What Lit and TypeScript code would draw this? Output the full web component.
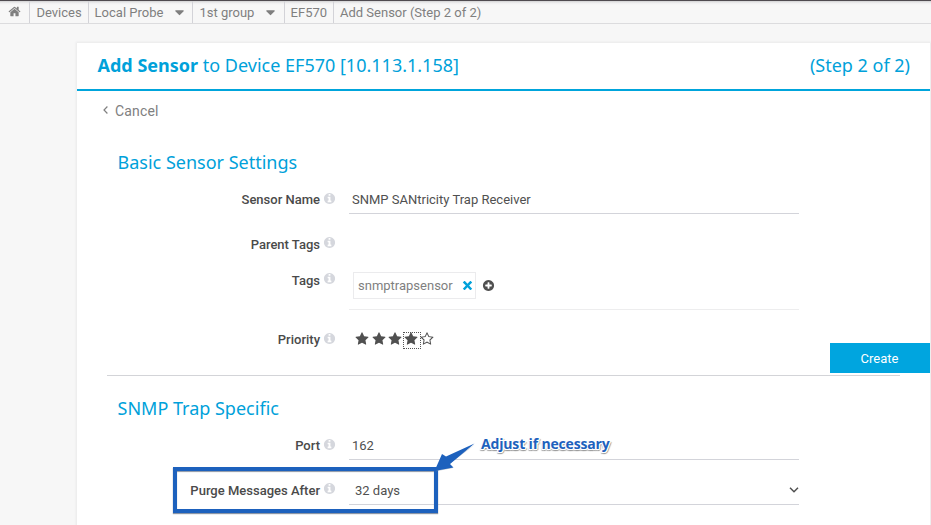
import { LitElement, html, css, svg } from "lit";
import { customElement, property } from "lit/decorators.js";

const DISC =
  "q0 209-103 385.5t-279.5 279.5-385.5 103-385.5-103-279.5-279.5-103-385.5 103-385.5 279.5-279.5 385.5-103 385.5 103 279.5 279.5 103 385.5z";

const STAR_EDGE =
  "l-363 354 86 500q1 7 1 20 0 21-10.5 35.5t-30.5 14.5q-19 0-40-12l-449-236-449 236q-22 12-40 12-21 0-31.5-14.5t-10.5-35.5q0-6 2-20l86-500-364-354q-25-27-25-48 0-37 56-46l502-73 225-455q19-41 49-41t49 41l225 455 502 73q56 9 56 46z";

const ICONS: Record<string, string> = {
  home: "M1472 992v480q0 26-19 45t-45 19h-384v-384h-256v384h-384q-26 0-45-19t-19-45v-480q0-1 .5-3t.5-3l575-474 575 474q1 2 1 6zm223-69l-62 74q-8 9-21 11h-3q-13 0-21-7l-692-577-692 577q-12 8-24 7-13-2-21-11l-62-74q-8-10-7-23.5t11-21.5l719-599q32-26 76-26t76 26l244 204v-195q0-14 9-23t23-9h192q14 0 23 9t9 23v408l219 182q10 8 11 21.5t-7 23.5z",
  star: "M1728 647q0 22-26 48" + STAR_EDGE,
  starOutline:
    "M1201 1004l306-297-422-62-189-382-189 382-422 62 306 297-73 421 378-199 377 199zm527-357q0 22-26 48" + STAR_EDGE,
  info:
    "M1152 1376v-160q0-14-9-23t-23-9h-96v-512q0-14-9-23t-23-9h-320q-14 0-23 9t-9 23v160q0 14 9 23t23 9h96v320h-96q-14 0-23 9t-9 23v160q0 14 9 23t23 9h448q14 0 23-9t9-23zm-128-896v-160q0-14-9-23t-23-9h-192q-14 0-23 9t-9 23v160q0 14 9 23t23 9h192q14 0 23-9t9-23zm640 416" + DISC,
  plus:
    "M1344 960v-128q0-26-19-45t-45-19h-256v-256q0-26-19-45t-45-19h-128q-26 0-45 19t-19 45v256h-256q-26 0-45 19t-19 45v128q0 26 19 45t45 19h256v256q0 26 19 45t45 19h128q26 0 45-19t19-45v-256h256q26 0 45-19t19-45zm320-64" + DISC,
  times:
    "M250 470L450 270H540L896 640 1252 270H1342L1542 470 1120 890 1542 1330 1342 1530H1252L896 1150 540 1530H450L250 1330 672 890z",
  caret: "M1408 704q0 26-19 45l-448 448q-19 19-45 19t-45-19l-448-448q-19-19-19-45t19-45 45-19h896q26 0 45 19t19 45z",
};

@customElement("ui-icon")
class UiIcon extends LitElement {
  @property() name = "star";

  static styles = css`
    :host {
      display: block;
      flex: none;
      width: 13px;
      height: 13px;
    }
    svg {
      display: block;
      width: 100%;
      height: 100%;
      fill: currentColor;
    }
  `;

  render() {
    return html`<svg viewBox="0 0 1792 1792">${svg`<path d=${ICONS[this.name]} />`}</svg>`;
  }
}

@customElement("form-row")
class FormRow extends LitElement {
  @property() label = "";

  static styles = css`
    :host {
      display: grid;
      grid-template-columns: 243px 29px 450px;
      box-sizing: border-box;
      line-height: 32px;
    }
    .label {
      height: 30px;
      text-align: right;
      font-weight: 500;
      color: #4a4a4a;
    }
    .info {
      color: #d5d7dd;
      padding: 8px 0 0 3px;
      margin-top: var(--info-shift, 0px);
    }
  `;

  render() {
    return html`
      <div class="label">${this.label}</div>
      <div class="info"><ui-icon name="info"></ui-icon></div>
      <slot></slot>
    `;
  }
}

@customElement("app-root")
class AppRoot extends LitElement {
  static styles = css`
    :host {
      display: block;
      position: relative;
      box-sizing: border-box;
      width: 931px;
      height: 525px;
      overflow: hidden;
      background: #f7f7f7;
      font: 13px/22px Roboto, sans-serif;
      color: #505050;
    }
    .crumbs {
      display: flex;
      box-sizing: border-box;
      height: 24px;
      border-top: 1px solid #4f4b50;
      border-bottom: 1px solid #dcdcde;
      background: linear-gradient(#d2d2d3, #efeff0 2px, #f7f7f7 4px);
      color: #7f7f7f;
    }
    .crumb {
      display: flex;
      align-items: center;
      box-sizing: border-box;
      border-right: 1px solid #d3d3d8;
      padding-left: 5.6px;
      line-height: 23px;
      white-space: nowrap;
    }
    .crumb:last-child {
      padding-left: 6px;
      border: 0;
    }
    .c-home { width: 30px; padding-left: 8px; }
    .c-home ui-icon { margin-bottom: 1px; }
    .c-devices { width: 59px; padding-left: 6.4px; }
    .c-probe { width: 104px; }
    .c-group { width: 92px; padding-left: 6.4px; }
    .c-device { width: 49px; }
    .crumb .caret {
      margin-left: auto;
      width: 15px;
      height: 15px;
    }
    .c-probe .caret { margin-right: 5px; }
    .c-group .caret { margin-right: 6px; }
    .card {
      box-sizing: border-box;
      width: 853px;
      height: 490px;
      margin: 19px 0 0 77px;
      background: #fff;
      box-shadow: 0 0 2px 1px #e9e9ea;
    }
    .head {
      display: flex;
      justify-content: space-between;
      box-sizing: border-box;
      height: 48px;
      padding: 0 20px 0 20.5px;
      border-bottom: 2px solid #00a5dc;
      font: 18px/45px "Noto Sans", sans-serif;
      color: #00a1da;
    }
    .head b {
      font-weight: 700;
    }
    .cancel {
      display: flex;
      align-items: center;
      gap: 7px;
      height: 40px;
      padding-left: 26px;
      color: #808080;
      font-size: 14px;
      letter-spacing: 0.15px;
    }
    .cancel svg {
      width: 5px;
      height: 8px;
      margin-bottom: 3px;
    }
    .chevron {
      fill: none;
      stroke: currentColor;
    }
    h2 {
      height: 44px;
      margin: 9px 0 0;
      padding-left: 40.5px;
      font: 18px/44px "Noto Sans", sans-serif;
      color: #00a1da;
    }
    .field {
      display: flex;
      align-items: center;
      box-sizing: border-box;
      height: 30px;
      line-height: 22px;
      padding: 2px 0 0 3px;
      border-bottom: 1px solid #d3d4da;
    }
    .plain {
      border: 0;
    }
    .parent {
      margin-top: 15px;
      --info-shift: -1px;
    }
    .tags {
      --info-shift: 5px;
      line-height: 44px;
    }
    .tags .field {
      height: 51px;
      padding: 0 0 0 4px;
      border-color: #ededee;
    }
    .tag {
      display: flex;
      align-items: center;
      justify-content: space-between;
      box-sizing: border-box;
      width: 123px;
      height: 27px;
      padding: 0 1px 0 4px;
      margin-top: 3px;
      margin-right: 6px;
      border: 1px solid #ebebed;
      color: #7f7f7f;
    }
    .tag ui-icon {
      color: #00a1da;
    }
    .tags .add {
      margin-top: 3px;
    }
    .priority {
      margin-top: 14px;
    }
    .priority .field {
      padding: 0 0 0 5.3px;
    }
    .star {
      position: relative;
      display: grid;
      place-items: center;
      box-sizing: border-box;
      width: 16.2px;
      height: 15px;
    }
    .star ui-icon {
      width: 14px;
      height: 14px;
    }
    .focused::after {
      content: "";
      position: absolute;
      box-sizing: border-box;
      left: 0.1px;
      top: 0.5px;
      width: 18px;
      height: 17px;
      border: 1px dotted #555;
    }
    .rule {
      height: 1px;
      width: 793px;
      margin: 21px 0 10px 30px;
      background: #d3d4d8;
    }
    .rule + h2 {
      margin: 0;
    }
    .purge {
      margin-top: 15px;
      --info-shift: -1px;
    }
    .purge .field {
      justify-content: space-between;
      padding-left: 6px;
    }
    .purge svg {
      width: 10px;
      height: 6px;
      margin-bottom: 1px;
    }
    .create {
      position: absolute;
      left: 830px;
      top: 343px;
      width: 100px;
      height: 30px;
      padding: 1px 1px 0 0;
      border: 0;
      background: #00a5df;
      color: #fff;
      font: 13px/30px Roboto, sans-serif;
    }
    .callout {
      position: absolute;
      left: 173px;
      top: 467px;
      box-sizing: border-box;
      width: 265px;
      height: 46px;
      border: 4px solid #1d61bd;
      box-shadow: 0 1px 1px #8b95a5, inset 0 1px 1px #8b95a5;
    }
    .arrow {
      position: absolute;
      left: 430px;
      top: 438px;
      width: 50px;
      height: 38px;
    }
    .note {
      position: absolute;
      left: 481px;
      top: 435px;
      font: 700 14px/18px "Open Sans", sans-serif;
      letter-spacing: -0.16px;
      color: #1d61bd;
      white-space: nowrap;
      text-shadow: 1px 0 #fff, -1px 0 #fff, 0 1px #fff, 0 -1px #fff,
        1px 1px #fff, -1px 1px #fff, 1px -1px #fff, -1px -1px #fff,
        1px 2px 1px #999, -1px 2px 1px #aaa, 2px 1px 1px #aaa;
    }
  `;

  render() {
    return html`
      <nav class="crumbs">
        <div class="crumb c-home"><ui-icon name="home"></ui-icon></div>
        <div class="crumb c-devices">Devices</div>
        <div class="crumb c-probe">Local Probe<ui-icon class="caret" name="caret"></ui-icon></div>
        <div class="crumb c-group">1st group<ui-icon class="caret" name="caret"></ui-icon></div>
        <div class="crumb c-device">EF570</div>
        <div class="crumb">Add Sensor (Step 2 of 2)</div>
      </nav>
      <main class="card">
        <header class="head">
          <span><b>Add Sensor</b> to Device EF570 [10.113.1.158]</span>
          <span>(Step 2 of 2)</span>
        </header>
        <div class="cancel">
          <svg class="chevron" viewBox="0 0 5 8"><path d="M4.4 .5L1 4l3.400 3.500" stroke-width="1.200" /></svg>
          <span>Cancel</span>
        </div>
        <h2>Basic Sensor Settings</h2>
        <form-row label="Sensor Name"><div class="field">SNMP SANtricity Trap Receiver</div></form-row>
        <form-row class="parent" label="Parent Tags"><div class="field plain"></div></form-row>
        <form-row class="tags" label="Tags">
          <div class="field">
            <div class="tag">snmptrapsensor<ui-icon name="times"></ui-icon></div>
            <ui-icon class="add" name="plus"></ui-icon>
          </div>
        </form-row>
        <form-row class="priority" label="Priority">
          <div class="field plain">
            ${[1, 2, 3, 4, 5].map(
              (n) => html`<span class="star ${n === 4 ? "focused" : ""}"
                ><ui-icon name=${n < 5 ? "star" : "starOutline"}></ui-icon
              ></span>`
            )}
          </div>
        </form-row>
        <div class="rule"></div>
        <h2>SNMP Trap Specific</h2>
        <form-row label="Port"><div class="field">162</div></form-row>
        <form-row class="purge" label="Purge Messages After">
          <div class="field">
            32 days
            <svg class="chevron" viewBox="0 0 10 6"><path d="M1 .8l4 4 4-4" stroke-width="1.500" /></svg>
          </div>
        </form-row>
      </main>
      <button class="create">Create</button>
      <div class="callout"></div>
      <svg class="arrow" viewBox="430 438 50 38">
        <path d="M475 444.500L449.500 464l3.500 4-18 3.500z" fill="#8b95a5" opacity=".5" />
        <path d="M474.500 443.500L446 456.500l-4-2.500-7.500 17 19-3.500-3.500-3.500z" fill="#1d61bd" />
      </svg>
      <div class="note">Adjust if necessary</div>
    `;
  }
}
